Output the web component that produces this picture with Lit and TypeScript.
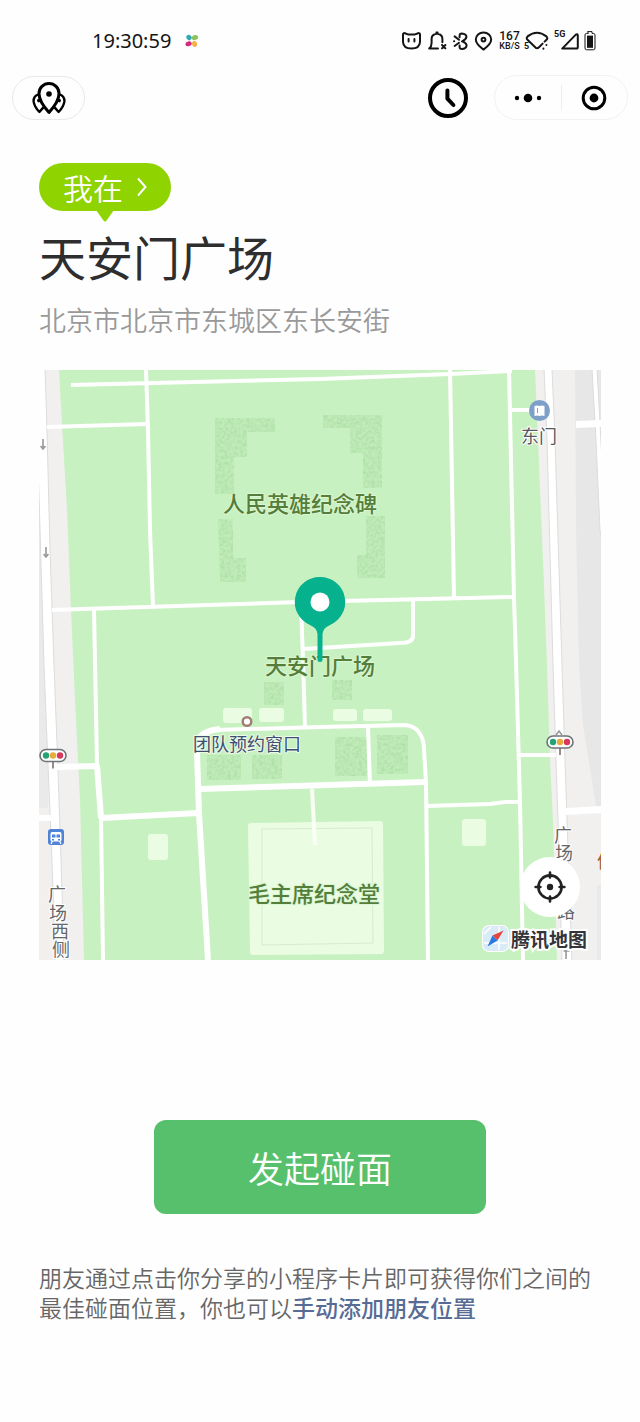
import { LitElement, html, svg, css } from "lit";
import { customElement, property } from "lit/decorators.js";

@customElement("status-bar")
class StatusBar extends LitElement {
  static styles = css`
    :host {
      display: flex;
      align-items: center;
      justify-content: space-between;
      height: 34px;
      padding: 0 44px 0 92px;
      color: #151515;
      font-family: "Noto Sans", "Noto Sans CJK SC", sans-serif;
    }
    .left,
    .right,
    .signals {
      display: flex;
      align-items: center;
    }
    .left {
      gap: 14px;
    }
    .right {
      gap: 6px;
    }
    .signals {
      gap: 4px;
    }
    .time {
      font-size: 20px;
      line-height: 24px;
    }
    .rate {
      display: flex;
      flex-direction: column;
      align-items: center;
      width: 21px;
      font-family: Roboto, sans-serif;
      font-weight: 500;
      font-size: 9px;
      line-height: 9px;
    }
    .rate b {
      font-size: 12px;
      line-height: 11px;
      font-weight: 500;
    }
    svg {
      display: block;
      fill: none;
      stroke: currentColor;
      stroke-width: 2;
      stroke-linecap: round;
      stroke-linejoin: round;
    }
    .petals {
      stroke: none;
    }
    .battery {
      stroke-width: 1;
    }
    .tag {
      fill: currentColor;
      stroke: none;
      font: 700 9px Roboto, sans-serif;
    }
    .solid {
      fill: currentColor;
      stroke: none;
    }
  `;
  render() {
    return html`
      <div class="left">
        <span class="time">19:30:59</span>
        <svg class="petals" width="14" height="14" viewBox="0 0 14 14">
          <ellipse cx="4" cy="3.6" rx="2.8" ry="2.5" fill="#35a7b4" transform="rotate(45 4 3.6)" />
          <ellipse cx="10" cy="3.6" rx="3.2" ry="2.4" fill="#8ac45c" transform="rotate(-20 10 3.6)" />
          <ellipse cx="3.6" cy="9.8" rx="3.2" ry="2.4" fill="#d32c7f" transform="rotate(-15 3.6 9.8)" />
          <ellipse cx="9.6" cy="10" rx="2.5" ry="3" fill="#f3b246" transform="rotate(-15 9.6 10)" />
        </svg>
      </div>
      <div class="right">
        <svg width="21" height="22" viewBox="0 0 21 22">
          <path d="M2 4.2Q2.2 2.8 3.8 3.2L7 4.4H14L17.2 3.2Q18.8 2.8 19 4.2V12Q18.6 18.6 10.5 18.6T2 12Z" />
          <path d="M7.6 9V11.6M13.4 9V11.6" />
        </svg>
        <svg width="19" height="22" viewBox="0 0 19 22">
          <path d="M10 18.5H1.2Q3.6 16.5 3.6 13V9Q3.6 4.6 8.4 3.8V2.6H9.6V3.8Q14.4 4.6 14.4 9V12.2" />
          <path d="M14 15L17.4 18.4M17.4 15L14 18.4" />
        </svg>
        <svg width="15" height="22" viewBox="0 0 15 22">
          <path d="M1.6 6.4L6 9.8M1.6 16L6 12.8M1 11.3H1.2M6.6 7.2V5Q6.8 3.4 8.6 3.4Q13.6 3.8 13.4 7Q13 9.6 9 11.3Q13.4 12.8 13.6 15.6Q13.2 18.8 8.8 19Q6.8 19 6.6 17.4V15.4" />
        </svg>
        <svg width="19" height="22" viewBox="0 0 19 22">
          <path d="M9.5 19.6Q1.8 14 1.8 9.6A7.7 7.2 0 0 1 17.2 9.6Q17.2 14 9.5 19.6Z" />
          <circle cx="9.5" cy="9.6" r="1.9" />
        </svg>
        <div class="signals">
          <div class="rate"><b>167</b><span>KB/S</span></div>
          <svg width="26" height="22" viewBox="0 0 26 22">
            <path d="M12 18L3 9.2Q2.2 7.6 3.6 6.4Q13-1 22.4 6.4Q23.8 7.6 23 9.2L20.6 11.6M12 18Q13.4 18.8 15 17.2L18.6 13.6" />
            <path d="M22.4 15V15.1M19.4 18.6V18.7" />
            <text class="tag" x="0" y="19">5</text>
          </svg>
          <svg width="26" height="22" viewBox="0 0 26 22">
            <path d="M8.2 18.6L21.8 4.6Q23.6 3.4 23.8 5.4V17Q23.8 18.6 22.2 18.6Z" />
            <text class="tag" x="0" y="7">5G</text>
          </svg>
          <svg class="battery" width="12" height="22" viewBox="0 0 12 22">
            <path d="M4 1.6H8V3.4H9.4Q11 3.6 11 5V18Q11 19.8 9.4 19.8H2.6Q1 19.8 1 18V5Q1 3.6 2.6 3.4H4Z" />
            <rect class="solid" x="3" y="5.6" width="6" height="12.2" />
          </svg>
        </div>
      </div>
    `;
  }
}

@customElement("nav-bar")
class NavBar extends LitElement {
  static styles = css`
    :host {
      display: flex;
      align-items: center;
      gap: 26px;
      padding: 0 12px;
    }
    button {
      display: flex;
      align-items: center;
      justify-content: center;
      padding: 0;
      border: 0;
      background: none;
      color: #000;
      cursor: pointer;
    }
    .friends {
      box-sizing: border-box;
      width: 73px;
      height: 44px;
      margin-right: auto;
      border: 1px solid #e9e9e9;
      border-radius: 22px;
    }
    .capsule {
      box-sizing: border-box;
      display: grid;
      grid-template-columns: 1fr 1px 1fr;
      align-items: center;
      width: 134px;
      height: 45px;
      border: 1px solid #f2f2f2;
      border-radius: 23px;
    }
    .divider {
      height: 26px;
      background: #eee;
    }
    svg {
      display: block;
      fill: none;
      stroke: currentColor;
    }
    .solid {
      fill: currentColor;
      stroke: none;
    }
  `;
  render() {
    return html`
      <button class="friends" aria-label="好友位置">
        <svg width="34" height="34" viewBox="0 0 34 34" stroke-width="2.4" stroke-linejoin="round">
          <path d="M6.6 13.4Q1.4 15 1.6 20.4Q2.4 26 7.4 31L11.4 26.4M27.4 13.4Q32.6 15 32.4 20.4Q31.6 26 26.6 31L22.6 26.4" />
          <path stroke-width="3" d="M17 31.4Q7 20.4 7 12.4A10 10 0 0 1 27 12.4Q27 20.4 17 31.4Z" />
          <circle class="solid" cx="17" cy="13" r="2.8" />
          <circle class="solid" cx="6.8" cy="19.6" r="1.8" />
          <circle class="solid" cx="27.2" cy="19.6" r="1.8" />
        </svg>
      </button>
      <button aria-label="历史记录">
        <svg width="40" height="42" viewBox="0 0 40 42">
          <circle cx="20" cy="21" r="18" stroke-width="4" />
          <path d="M19.4 13.6V21.6L25.4 28" stroke-width="4" stroke-linecap="round" stroke-linejoin="round" />
        </svg>
      </button>
      <div class="capsule">
        <button aria-label="更多">
          <svg width="28" height="10" viewBox="0 0 28 10">
            <circle class="solid" cx="3" cy="5" r="2.2" />
            <circle class="solid" cx="14" cy="5" r="4.3" />
            <circle class="solid" cx="25" cy="5" r="2.2" />
          </svg>
        </button>
        <span class="divider"></span>
        <button aria-label="关闭">
          <svg width="26" height="26" viewBox="0 0 26 26">
            <circle cx="13" cy="13" r="10.8" stroke-width="3" />
            <circle class="solid" cx="13" cy="13" r="4.4" />
          </svg>
        </button>
      </div>
    `;
  }
}

const narrowRoads = [
  "M71 385L320 379L450 374L512 371",
  "M146 370L148 430L150 530L153 606",
  "M47 427L147 424",
  "M52 610L300 602L514 597",
  "M94 610L97 765",
  "M101 818L103 960",
  "M301 604L303 660L305 727",
  "M303 649L400 643Q413 643 413 636V600",
  "M368 727L370 785",
  "M450 370L454 598",
  "M509 370L514 597L516 660L520 803L523 960",
  "M512 410H530",
  "M427 806L490 804L505 802H520",
  "M520 755H556",
  "M215 730L320 727L405 725Q416 726 420 734Q424 740 424 750L426 783L427 870L428 960",
];
const wideRoads = [
  "M56 767L97 766",
  "M97 765L101 818",
  "M101 818L198 813",
  "M220 729Q202 731 198 740L197 752L199 813L208 960",
  "M200 789L426 782",
];
const paleBuildings = [
  [223, 708, 29, 15],
  [259, 708, 25, 14],
  [333, 709, 24, 12],
  [363, 709, 29, 12],
  [148, 834, 20, 26],
  [462, 819, 24, 27],
];
const groves = [
  "M215 418H275V432H247V457H234V494H215Z",
  "M218 519H233V558H246V582H220Z",
  "M323 415H382V488H363V453H350V428H323Z",
  "M366 516H385V578H357V555H366Z",
  "M264 682H284V705H264Z",
  "M332 680H352V700H332Z",
  "M207 755H241V780H207Z",
  "M252 755H282V779H252Z",
  "M335 737H367V776H335Z",
  "M377 735H408V774H377Z",
];

@customElement("place-map")
class PlaceMap extends LitElement {
  static styles = css`
    :host {
      display: block;
      position: relative;
      overflow: hidden;
      font-family: "Noto Sans CJK SC", sans-serif;
    }
    .canvas {
      display: block;
      width: 100%;
      height: auto;
    }
    .narrow {
      fill: none;
      stroke: #fff;
      stroke-width: 4;
      stroke-linejoin: round;
    }
    .wide {
      fill: none;
      stroke: #fff;
      stroke-width: 6;
      stroke-linejoin: round;
    }
    .pale {
      fill: #eafce2;
    }
    text {
      text-anchor: middle;
      paint-order: stroke;
      stroke-linejoin: round;
    }
    .park {
      font-size: 22px;
      font-weight: 500;
      fill: #547e3a;
      stroke: #daf6d2;
      stroke-width: 2px;
    }
    .poi {
      font-size: 18px;
      fill: #3e4f70;
      stroke: #eefaea;
      stroke-width: 2px;
    }
    .gate {
      font-size: 18px;
      fill: #555a62;
      stroke: #fff;
      stroke-width: 2px;
    }
    .street {
      font-size: 18px;
      fill: #666;
      stroke: #fff;
      stroke-width: 2px;
    }
    .food {
      font-size: 18px;
      fill: #a0622d;
      text-anchor: start;
    }
    .locate {
      position: absolute;
      right: 21px;
      bottom: 43px;
      display: flex;
      align-items: center;
      justify-content: center;
      width: 60px;
      height: 60px;
      padding: 0;
      border: 0;
      border-radius: 50%;
      background: #fff;
      color: #222;
      cursor: pointer;
    }
    .brand {
      position: absolute;
      right: 14px;
      bottom: 8px;
      display: flex;
      align-items: center;
      gap: 2px;
      color: #33353a;
      font-size: 19px;
      line-height: 26px;
      font-weight: 700;
      -webkit-text-stroke: 4px #fff;
      paint-order: stroke fill;
    }
  `;

  private light(x: number, y: number) {
    return svg`
      <path d=${`M${x} ${y + 6}V${y + 13}`} stroke="#6d5a55" stroke-width="1.4" />
      <rect x=${x - 13} y=${y - 6} width="26" height="12" rx="6" fill="#fff" stroke="#6c7478" stroke-width="1.6" />
      <circle cx=${x - 7} cy=${y} r="3.2" fill="#27a277" />
      <circle cx=${x} cy=${y} r="3.2" fill="#e8ac3e" />
      <circle cx=${x + 7} cy=${y} r="3.2" fill="#d8385c" />`;
  }

  render() {
    return html`
      <svg class="canvas" viewBox="39 370 562 590" role="img" aria-label="天安门广场地图">
        <defs>
          <filter id="mottle" x="0" y="0" width="100%" height="100%" color-interpolation-filters="sRGB">
            <feTurbulence type="fractalNoise" baseFrequency="0.32" numOctaves="2" seed="4" />
            <feColorMatrix values="0 0 0 0 0.68  0 0 0 0 0.87  0 0 0 0 0.65  2 0 0 0 -0.7" />
            <feComposite in2="SourceGraphic" operator="in" result="spots" />
            <feMerge><feMergeNode in="SourceGraphic" /><feMergeNode in="spots" /></feMerge>
          </filter>
        </defs>
        <rect x="39" y="370" width="562" height="590" fill="#f1f0ef" />
        <path fill="#e7e7e7" d="M575 370H601V812H597L583 725L579 665L576 530Z" />
        <path fill="#eaeaea" d="M39 495L44 665L48 770V808H39Z" />
        <path fill="#eaeaea" d="M597 885H601V960H597Z" />
        <path fill="#fff" stroke="#dcdcdc" stroke-width="1"
          d="M36 368H45L47 430L50 550L54 665L58 770L62 890L64 962H55L53 890L50 812L48 765L44 665L39 495L36 400Z" />
        <path fill="#c8f1c1"
          d="M59 370L62 425L67 510L71 610L75 700L80 800L84 960H557L553 820L550 760L547 665L543 560L538 440L535 370Z" />
        <path fill="#fff" stroke="#dcdcdc" stroke-width="1"
          d="M544 368H552L555 440L562 665L565 760L567 820L572 962H562L558 820L556 760L553 665L547 440Z" />
        <path fill="#fff" stroke="#dcdcdc" stroke-width="1" d="M592 368H597L603 480V550L600 530L596 440Z" />
        <path fill="#fff" d="M576 421L602 420V427L576 428ZM566 808L602 806V813L566 815ZM38 815H54V821H38Z" />

        <g filter="url(#mottle)" fill="#c0ecb9">${groves.map((d) => svg`<path d=${d} />`)}</g>

        ${paleBuildings.map(
          ([x, y, w, h]) => svg`<rect class="pale" x=${x} y=${y} width=${w} height=${h} rx="3" />`
        )}
        <path class="pale" d="M251 823L380 821Q383 821 383 824L384 951Q384 954 381 954L253 955Q250 955 250 952L248 826Q248 823 251 823Z" />
        <path fill="none" stroke="#d8ecd0" d="M262 829L372 828L373 943L262 945Z" />
        <path fill="none" stroke="#fafff6" stroke-width="4" d="M312 789L315 845" />

        ${narrowRoads.map((d) => svg`<path class="narrow" d=${d} />`)}
        ${wideRoads.map((d) => svg`<path class="wide" d=${d} />`)}

        <g fill="none" stroke="#999" stroke-width="1.6">
          <path d="M43 439V448M40.6 446L43 449L45.4 446" />
          <path d="M46 547V556M43.6 554L46 557L48.4 554" />
          <path d="M566 959V950M563.5 951H569.5" />
          <path d="M556 735L559 731L562 735" />
        </g>

        <circle cx="247" cy="721.5" r="4.3" fill="#fff" stroke="#a07c72" stroke-width="2.4" />
        <circle cx="539.5" cy="410.5" r="10.5" fill="#7d9fc8" />
        <path fill="#fff" d="M534.5 406Q537 405 539.5 406Q542 405 544.5 406V416Q542 415 539.5 416Q537 415 534.5 416Z" />
        <path stroke="#7d9fc8" d="M537.5 408V413" />

        ${this.light(53, 755.5)} ${this.light(560, 742)}

        <rect x="48" y="829" width="16" height="16" rx="3" fill="#4e83d8" />
        <path fill="#fff" d="M52 832H60Q61.5 832 61.5 834V840Q61.5 841.5 60 841.5H52Q50.5 841.5 50.5 840V834Q50.5 832 52 832Z" />
        <path stroke="#fff" stroke-width="1.2" d="M52.5 841L51 844M59.5 841L61 844" />
        <path fill="#4e83d8" d="M52 834.5H55.5V837.5H52ZM56.5 834.5H60V837.5H56.5ZM52 839H54V840.5H52ZM58 839H60V840.5H58Z" />

        <text class="park" x="300" y="512">人民英雄纪念碑</text>
        <text class="park" x="320" y="674">天安门广场</text>
        <text class="park" x="314" y="902">毛主席纪念堂</text>
        <text class="poi" x="247" y="751">团队预约窗口</text>
        <text class="gate" x="539" y="443">东门</text>
        <text class="street" x="57" y="901">广</text>
        <text class="street" x="58" y="920">场</text>
        <text class="street" x="60" y="938">西</text>
        <text class="street" x="61" y="956">侧</text>
        <text class="street" x="563" y="842">广</text>
        <text class="street" x="564" y="860">场</text>
        <text class="street" x="566" y="918">路</text>
        <text class="food" x="597" y="868">体</text>

        <path fill="#06b28e" d="M320 577A25 25 0 0 1 330 625Q323 628 322.5 634V660Q322.5 662 320 662Q317.5 662 317.5 660V634Q317 628 310 625A25 25 0 0 1 320 577Z" />
        <circle cx="320" cy="602" r="9.5" fill="#fff" />
      </svg>

      <button class="locate" aria-label="定位">
        <svg width="34" height="34" viewBox="0 0 34 34" fill="none" stroke="currentColor" stroke-width="2.6" stroke-linecap="round">
          <circle cx="17" cy="17" r="11.6" />
          <path d="M17 2.6V7.4M17 26.6V31.4M2.6 17H7.4M26.6 17H31.4" />
          <circle cx="17" cy="17" r="3.2" fill="currentColor" stroke="none" />
        </svg>
      </button>
      <div class="brand">
        <svg width="27" height="27" viewBox="0 0 27 27">
          <rect x="1" y="1" width="25" height="25" rx="6" fill="#d8ebf6" stroke="#fff" stroke-width="2" />
          <path d="M17 2V25M2 18H25M2 9L9 2" stroke="#fff" stroke-width="1.5" />
          <path fill="#e8443c" d="M21.5 5.5L10.5 10.5L15.5 15.5Z" />
          <path fill="#2b78e0" d="M5.5 21.5L10.5 10.5L15.5 15.5Z" />
        </svg>
        <span>腾讯地图</span>
      </div>
    `;
  }
}

@customElement("app-root")
class AppRoot extends LitElement {
  @property() place = "天安门广场";
  @property() address = "北京市北京市东城区东长安街";

  static styles = css`
    :host {
      display: block;
      min-height: 100vh;
      box-sizing: border-box;
      padding-top: 24px;
      background: #fefefe;
      font-family: "Noto Sans CJK SC", sans-serif;
    }
    nav-bar {
      margin-top: 17px;
    }
    main {
      display: flex;
      flex-direction: column;
      padding: 43px 39px 97px;
    }
    .here {
      position: relative;
      align-self: flex-start;
      display: flex;
      align-items: center;
      gap: 14px;
      height: 48px;
      padding: 0 24px;
      border: 0;
      border-radius: 24px;
      background: #8fd300;
      color: #fff;
      font-family: inherit;
      font-size: 30px;
      line-height: 48px;
      font-weight: 350;
      cursor: pointer;
    }
    .tail {
      position: absolute;
      left: 50%;
      top: 100%;
      margin: -1px 0 0 -9px;
    }
    h1 {
      margin: 15px 0 0;
      color: #2e2e2e;
      font-size: 47px;
      line-height: 60px;
      font-weight: 400;
    }
    .address {
      margin: 16px 0 0;
      color: #999;
      font-size: 27px;
      line-height: 36px;
      font-weight: 350;
    }
    place-map {
      margin-top: 32px;
    }
    .start {
      align-self: center;
      width: 59%;
      height: 94px;
      margin-top: 160px;
      padding: 0;
      border: 0;
      border-radius: 12px;
      background: #57c06c;
      color: #fff;
      font-family: inherit;
      font-size: 36px;
      font-weight: 350;
      cursor: pointer;
    }
    .hint {
      margin: 48px 0 0;
      color: #666;
      font-size: 23px;
      line-height: 30px;
      font-weight: 350;
    }
    a {
      color: #576b95;
      font-weight: 500;
      text-decoration: none;
    }
  `;

  render() {
    return html`
      <status-bar></status-bar>
      <nav-bar></nav-bar>
      <main>
        <button class="here">
          <span>我在</span>
          <svg width="10" height="20" viewBox="0 0 10 20" fill="none" stroke="#fff" stroke-width="2" stroke-linecap="round">
            <path d="M1.5 2L8.5 10L1.5 18" />
          </svg>
          <svg class="tail" width="18" height="12" viewBox="0 0 18 12" fill="#8fd300">
            <path d="M0 0H18L10.5 10.5Q9 12.5 7.5 10.5Z" />
          </svg>
        </button>
        <h1>${this.place}</h1>
        <p class="address">${this.address}</p>
        <place-map></place-map>
        <button class="start">发起碰面</button>
        <p class="hint">
          朋友通过点击你分享的小程序卡片即可获得你们之间的最佳碰面位置，你也可以<a href="#friends">手动添加朋友位置</a>
        </p>
      </main>
    `;
  }
}
